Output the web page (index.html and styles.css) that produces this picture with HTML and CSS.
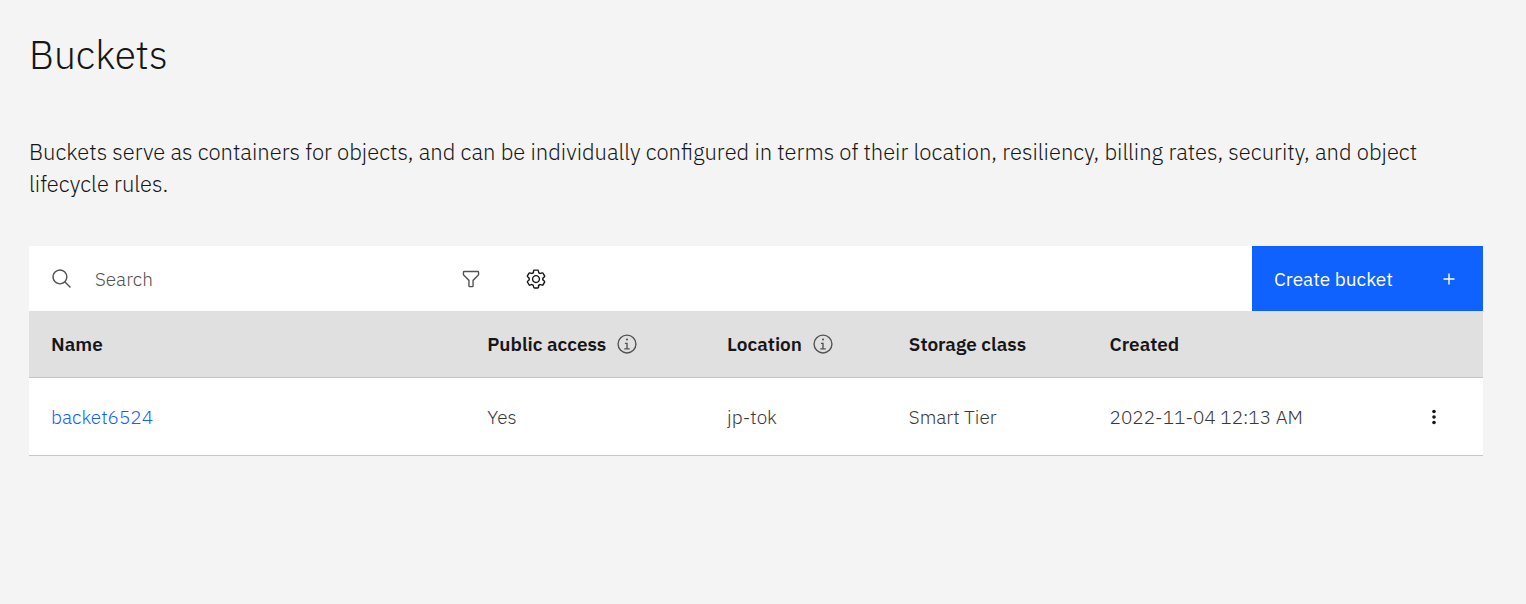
FILE: index.html
```html
<!DOCTYPE html>
<html lang="en">
<head>
<meta charset="utf-8">
<meta name="viewport" content="width=device-width, initial-scale=1">
<title>Buckets</title>
<link rel="stylesheet" href="styles.css">
</head>
<body>
<main class="page">
  <h1 class="title">Buckets</h1>
  <p class="intro">Buckets serve as containers for objects, and can be individually configured in terms of their location, resiliency, billing rates, security, and object lifecycle rules.</p>
  <section class="panel">
    <div class="toolbar">
      <label class="search">
        <svg class="icon" viewBox="0 0 32 32" aria-hidden="true"><path d="M29 27.586l-7.552-7.552a11.018 11.018 0 1 0-1.414 1.414L27.586 29zM4 13a9 9 0 1 1 9 9 9.01 9.01 0 0 1-9-9z"/></svg>
        <input class="search-input" type="search" placeholder="Search" aria-label="Search">
      </label>
      <button class="tool tool-filter" type="button" aria-label="Filter">
        <svg class="icon" viewBox="0 0 32 32"><path d="M18 28h-4a2 2 0 0 1-2-2v-7.590L4.590 11A2 2 0 0 1 4 9.590V6a2 2 0 0 1 2-2h20a2 2 0 0 1 2 2v3.590A2 2 0 0 1 27.410 11L20 18.410V26a2 2 0 0 1-2 2zM6 6v3.590l8 8V26h4v-8.410l8-8V6z"/></svg>
      </button>
      <button class="tool" type="button" aria-label="Settings">
        <svg class="icon" viewBox="0 0 16 16"><path d="M13.500 8.400c0-.1 0-.3 0-.4 0-.1 0-.3 0-.4l1-.8c.4-.3.4-.9.2-1.300l-1.200-2C13.300 3.200 13 3 12.600 3c-.1 0-.2 0-.3.1l-1.200.4c-.2-.1-.4-.3-.7-.4l-.3-1.300C10.100 1.300 9.700 1 9.200 1H6.800c-.5 0-.9.3-1 .8L5.600 3.100c-.3.1-.5.2-.7.4L3.700 3C3.600 3 3.500 3 3.400 3 3 3 2.700 3.200 2.500 3.500l-1.200 2C1.100 5.900 1.200 6.400 1.600 6.800l.9.9c0 .1 0 .3 0 .4 0 .1 0 .3 0 .4L1.600 9.200c-.4.3-.5.9-.2 1.300l1.200 2C2.700 12.800 3 13 3.400 13c.1 0 .2 0 .3-.1l1.200-.4c.2.1.4.3.7.4l.3 1.300c.1.5.5.8 1 .8h2.400c.5 0 .9-.3 1-.8l.2-1.300c.2-.1.500-.2.7-.4l1.200.4c.1 0 .2.100.3.100.4 0 .7-.2.9-.5l1.100-2c.2-.4.200-.9-.2-1.300L13.500 8.400zM12.600 12l-1.700-.6c-.4.3-.9.600-1.400.8L9.200 14H6.800l-.4-1.800c-.5-.2-.900-.500-1.400-.8L3.400 12l-1.200-2 1.400-1.200c-.1-.5-.1-1.100 0-1.600L2.200 6l1.200-2 1.700.6C5.500 4.200 6 4 6.500 3.800L6.800 2h2.400l.4 1.800c.5.2.9.5 1.400.8L12.600 4l1.200 2-1.400 1.200c.1.5.1 1.100 0 1.600l1.400 1.200L12.600 12z"/><path d="M8 11c-1.700 0-3-1.300-3-3s1.300-3 3-3 3 1.300 3 3C11 9.600 9.700 11 8 11zM8 6C6.900 6 6 6.800 6 7.900v.1c0 1.100.8 2 1.900 2H8c1.100 0 2-.8 2-1.900V8c0-1.100-.8-2-1.900-2H8z"/></svg>
      </button>
      <button class="create" type="button"><span>Create bucket</span>
        <svg class="icon" viewBox="0 0 32 32" aria-hidden="true"><path d="M17 15V8h-2v7H8v2h7v7h2v-7h7v-2z"/></svg>
      </button>
    </div>
    <table class="table">
      <colgroup><col class="c-name"><col class="c-access"><col class="c-location"><col class="c-class"><col class="c-created"><col class="c-menu"></colgroup>
      <thead>
        <tr>
          <th scope="col">Name</th>
          <th scope="col"><span class="hint">Public access <svg class="icon" viewBox="0 0 32 32" role="img" aria-label="Information"><path d="M17 22v-8h-4v2h2v6h-3v2h8v-2zM16 8a1.500 1.500 0 1 0 1.500 1.500A1.500 1.500 0 0 0 16 8z"/><path d="M16 30a14 14 0 1 1 14-14 14 14 0 0 1-14 14zm0-26a12 12 0 1 0 12 12A12 12 0 0 0 16 4z"/></svg></span></th>
          <th scope="col"><span class="hint">Location <svg class="icon" viewBox="0 0 32 32" role="img" aria-label="Information"><path d="M17 22v-8h-4v2h2v6h-3v2h8v-2zM16 8a1.500 1.500 0 1 0 1.500 1.500A1.500 1.500 0 0 0 16 8z"/><path d="M16 30a14 14 0 1 1 14-14 14 14 0 0 1-14 14zm0-26a12 12 0 1 0 12 12A12 12 0 0 0 16 4z"/></svg></span></th>
          <th scope="col">Storage class</th>
          <th scope="col">Created</th>
          <td></td>
        </tr>
      </thead>
      <tbody>
        <tr>
          <td><a class="link" href="#">backet6524</a></td>
          <td>Yes</td>
          <td>jp-tok</td>
          <td>Smart Tier</td>
          <td>2022-11-04 12:13 AM</td>
          <td><button class="more" type="button" aria-label="More actions"><svg class="icon" viewBox="0 0 32 32"><circle cx="16" cy="8" r="2.600"/><circle cx="16" cy="16" r="2.600"/><circle cx="16" cy="24" r="2.600"/></svg></button></td>
        </tr>
      </tbody>
    </table>
  </section>
</main>
</body>
</html>
```
FILE: styles.css
```css
* { box-sizing: border-box; }
body {
  margin: 0;
  background: #f4f4f4;
  color: #161616;
  font-family: "IBM Plex Sans", "Open Sans", "Noto Sans", sans-serif;
  font-size: 19px;
}
button, input { font: inherit; }
button { border: 0; background: none; padding: 0; cursor: pointer; }
.page { padding: 28px 43px 0 29px; }
.title { margin: 0 0 54px; font-size: 39px; font-weight: 300; line-height: 54px; }
.intro { margin: 0 0 46px; font-size: 22px; font-weight: 300; line-height: 32px; }
.icon { display: block; width: 22px; height: 22px; fill: currentColor; flex: none; }
.toolbar { display: flex; height: 65px; background: #fff; }
.search { display: flex; align-items: center; gap: 22px; width: 409px; padding-left: 22px; color: #525252; }
.search-input { flex: 1; min-width: 0; border: 0; padding: 0; outline: 0; background: none; color: #161616; font-weight: 300; }
.search-input::placeholder { color: #525252; opacity: 1; }
.tool { display: grid; place-items: center; width: 65px; color: #161616; }
.tool-filter { color: #525252; }
.create { display: flex; align-items: center; justify-content: space-between; width: 231px; margin-left: auto; padding: 0 23px 0 22px; background: #0f62fe; color: #fff; }
.table { width: 100%; border-collapse: separate; border-spacing: 0; table-layout: fixed; }
.table th, .table td { padding: 0 0 0 22px; text-align: left; white-space: nowrap; border-bottom: 1px solid #c6c6c6; }
.table thead { background: #e0e0e0; }
.table thead tr { height: 67px; }
.table th { font-weight: 600; }
.table tbody { background: #fff; color: #393939; font-weight: 300; }
.table tbody tr { height: 78px; }
.c-name { width: 30%; }
.c-access { width: 16.5%; }
.c-location { width: 12.5%; }
.c-class { width: 13.8%; }
.c-created { width: 20.5%; }
.hint { display: flex; align-items: center; gap: 10px; }
.hint .icon { color: #525252; }
.link { color: #0f62fe; text-decoration: none; }
.more { display: block; margin-left: 15px; color: #161616; }
```
